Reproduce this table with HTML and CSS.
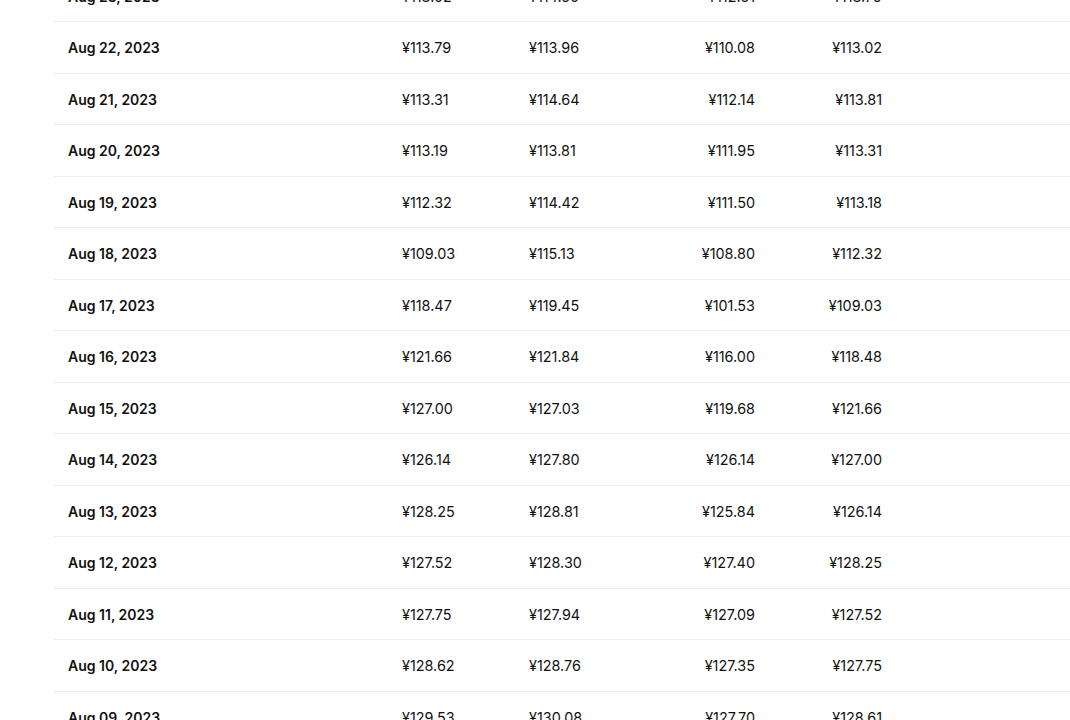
FILE: index.html
```html
<!DOCTYPE html>
<html>
<head>
<meta charset="utf-8">
<link rel="stylesheet" href="styles.css">
</head>
<body>
<div class="table">
  <div class="row"><div class="date">Aug 23, 2023</div><div class="open">¥113.02</div><div class="high">¥114.50</div><div class="low">¥112.61</div><div class="close">¥113.79</div></div>
  <div class="row"><div class="date">Aug 22, 2023</div><div class="open">¥113.79</div><div class="high">¥113.96</div><div class="low">¥110.08</div><div class="close">¥113.02</div></div>
  <div class="row"><div class="date">Aug 21, 2023</div><div class="open">¥113.31</div><div class="high">¥114.64</div><div class="low">¥112.14</div><div class="close">¥113.81</div></div>
  <div class="row"><div class="date">Aug 20, 2023</div><div class="open">¥113.19</div><div class="high">¥113.81</div><div class="low">¥111.95</div><div class="close">¥113.31</div></div>
  <div class="row"><div class="date">Aug 19, 2023</div><div class="open">¥112.32</div><div class="high">¥114.42</div><div class="low">¥111.50</div><div class="close">¥113.18</div></div>
  <div class="row"><div class="date">Aug 18, 2023</div><div class="open">¥109.03</div><div class="high">¥115.13</div><div class="low">¥108.80</div><div class="close">¥112.32</div></div>
  <div class="row"><div class="date">Aug 17, 2023</div><div class="open">¥118.47</div><div class="high">¥119.45</div><div class="low">¥101.53</div><div class="close">¥109.03</div></div>
  <div class="row"><div class="date">Aug 16, 2023</div><div class="open">¥121.66</div><div class="high">¥121.84</div><div class="low">¥116.00</div><div class="close">¥118.48</div></div>
  <div class="row"><div class="date">Aug 15, 2023</div><div class="open">¥127.00</div><div class="high">¥127.03</div><div class="low">¥119.68</div><div class="close">¥121.66</div></div>
  <div class="row"><div class="date">Aug 14, 2023</div><div class="open">¥126.14</div><div class="high">¥127.80</div><div class="low">¥126.14</div><div class="close">¥127.00</div></div>
  <div class="row"><div class="date">Aug 13, 2023</div><div class="open">¥128.25</div><div class="high">¥128.81</div><div class="low">¥125.84</div><div class="close">¥126.14</div></div>
  <div class="row"><div class="date">Aug 12, 2023</div><div class="open">¥127.52</div><div class="high">¥128.30</div><div class="low">¥127.40</div><div class="close">¥128.25</div></div>
  <div class="row"><div class="date">Aug 11, 2023</div><div class="open">¥127.75</div><div class="high">¥127.94</div><div class="low">¥127.09</div><div class="close">¥127.52</div></div>
  <div class="row"><div class="date">Aug 10, 2023</div><div class="open">¥128.62</div><div class="high">¥128.76</div><div class="low">¥127.35</div><div class="close">¥127.75</div></div>
  <div class="row"><div class="date">Aug 09, 2023</div><div class="open">¥129.53</div><div class="high">¥130.08</div><div class="low">¥127.70</div><div class="close">¥128.61</div></div>
</div>
</body>
</html>
```
FILE: styles.css
```css
html, body {
  margin: 0;
  padding: 0;
  background: #ffffff;
  overflow: hidden;
}
body {
  font-family: Inter, "Liberation Sans", sans-serif;
  font-size: 14px;
  color: #111111;
}
.table {
  margin: -29.5px 0 0 54px;
}
.row {
  display: grid;
  grid-template-columns: 348px 127px 113px 113px 127px 1fr;
  align-items: center;
  box-sizing: border-box;
  height: 51.5px;
  padding-top: 1.5px;
  border-bottom: 1px solid #ededed;
  line-height: 20px;
}
.date {
  padding-left: 14px;
  font-weight: 600;
}
.open, .high, .low, .close {
  font-size: 14.4px;
}
.open, .high {
  text-align: left;
}
.low, .close {
  text-align: right;
}
```
